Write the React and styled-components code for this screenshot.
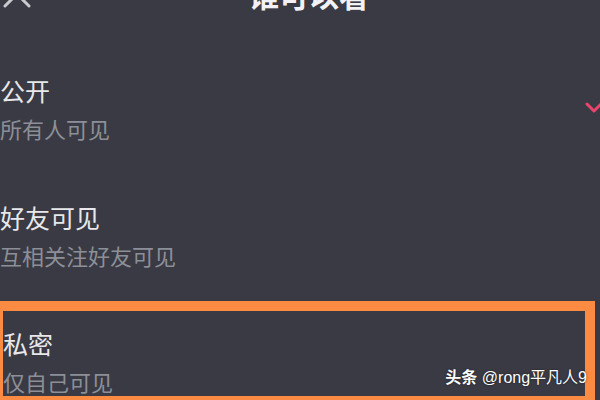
import React from 'react'
import styled, { createGlobalStyle } from 'styled-components'

const GlobalStyle = createGlobalStyle`
    html, body {
        margin: 0;
        padding: 0;
        background: #393a44;
    }
    * {
        box-sizing: border-box;
    }
`;

const Page = styled.div`
    width: 600px;
    height: 400px;
    overflow: hidden;
    position: relative;
    background: #393a44;
    font-family: "Noto Sans CJK SC", "Noto Sans", sans-serif;
`;

const Header = styled.header`
    height: 60px;
    margin-top: -36px;
    display: flex;
    align-items: center;
    justify-content: center;
    position: relative;
`;

const CloseButton = styled.button`
    position: absolute;
    left: 2px;
    top: 15px;
    width: 30px;
    height: 30px;
    padding: 0;
    border: none;
    background: none;
    color: #c9cacf;
`;

const HeaderTitle = styled.h1`
    margin: 0;
    padding-left: 18px;
    font-size: 30px;
    font-weight: 700;
    line-height: 60px;
    color: #f2f2f4;
`;

const List = styled.ul`
    list-style: none;
    margin: 22px 0 0;
    padding: 0;
`;

const Row = styled.li`
    width: ${p => (p.$highlighted ? '602px' : '609px')};
    margin-left: ${p => (p.$highlighted ? '-7px' : '0')};
    margin-top: ${p => (p.$highlighted ? '1px' : '0')};
    padding: ${p => (p.$highlighted ? '17px 0 0' : '29px 0 30px')};
    border: ${p => (p.$highlighted ? '10px solid #fb8a43' : 'none')};
    display: flex;
    align-items: center;
    justify-content: space-between;
`;

const Texts = styled.div`
    display: flex;
    flex-direction: column;
    gap: 8px;
`;

const Title = styled.div`
    font-size: 25px;
    line-height: 30px;
    color: #e8e8eb;
`;

const Sub = styled.div`
    font-size: 22px;
    line-height: 30px;
    color: #8d8f97;
`;

const Watermark = styled.div`
    position: absolute;
    right: 13px;
    bottom: 12px;
    font-family: "Liberation Sans", "Noto Sans CJK SC", sans-serif;
    font-size: 16px;
    line-height: 20px;
    color: #ffffff;
    text-shadow: 0 0 2px rgba(0, 0, 0, 0.6);
    white-space: nowrap;

    b {
        font-family: "Noto Sans CJK SC", sans-serif;
        font-weight: 700;
    }
`;

const CloseIcon = () => (
    <svg width="30" height="30" viewBox="0 0 30 30" fill="none" stroke="currentColor" strokeWidth="3" strokeLinecap="round">
        <path d="M3 3 L27 27 M27 3 L3 27" />
    </svg>
)

const CheckIcon = () => (
    <svg width="24" height="16" viewBox="0 0 24 16" fill="none" stroke="#e8466c" strokeWidth="3" strokeLinecap="round" strokeLinejoin="round">
        <path d="M2 3 L9 10 L20 -1" />
    </svg>
)

const options = [
    { title: '公开', sub: '所有人可见', checked: true },
    { title: '好友可见', sub: '互相关注好友可见' },
    { title: '私密', sub: '仅自己可见', highlighted: true },
]

const App = () => {
    return (
        <Page>
            <GlobalStyle />
            <Header>
                <CloseButton><CloseIcon /></CloseButton>
                <HeaderTitle>谁可以看</HeaderTitle>
            </Header>
            <List>
                {options.map(o => (
                    <Row key={o.title} $highlighted={o.highlighted}>
                        <Texts>
                            <Title>{o.title}</Title>
                            <Sub>{o.sub}</Sub>
                        </Texts>
                        {o.checked && <CheckIcon />}
                    </Row>
                ))}
            </List>
            <Watermark><b>头条</b> @rong平凡人9</Watermark>
        </Page>
    )
}

export default App
